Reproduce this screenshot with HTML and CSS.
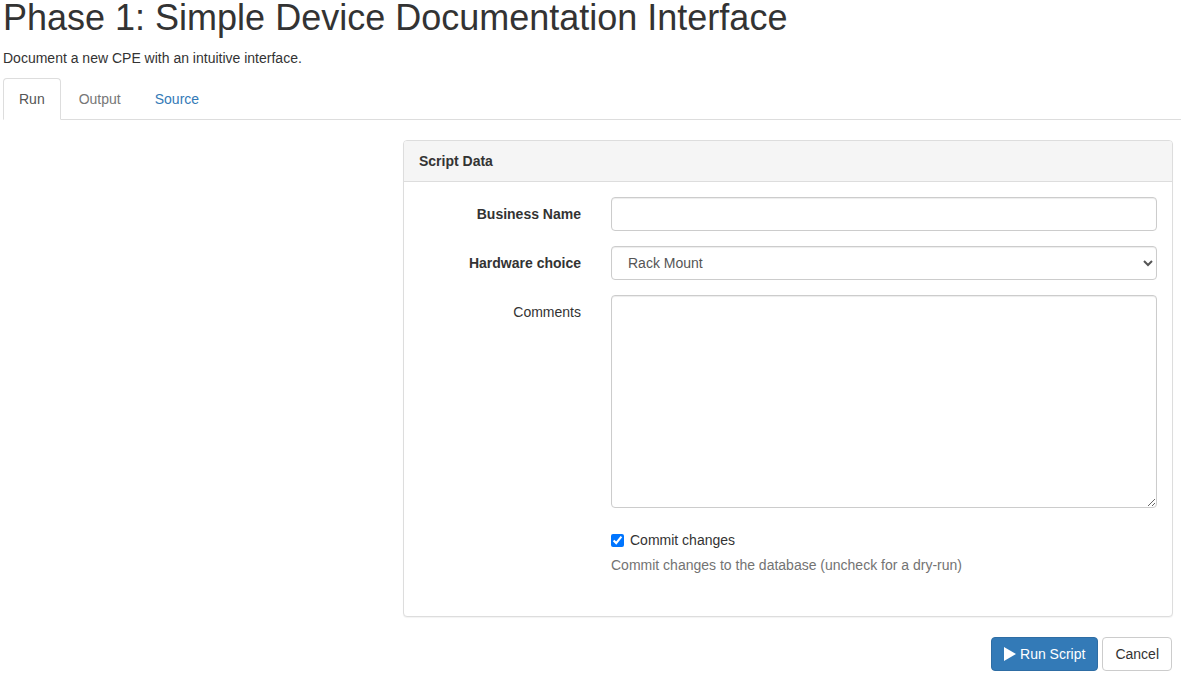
FILE: index.html
```html
<!DOCTYPE html>
<html lang="en">
<head>
<meta charset="utf-8">
<title>Phase 1: Simple Device Documentation Interface</title>
<link rel="stylesheet" href="styles.css">
</head>
<body>
<div class="page">
  <h1 class="title">Phase 1: Simple Device Documentation Interface</h1>
  <p class="lead-text">Document a new CPE with an intuitive interface.</p>
  <ul class="nav-tabs">
    <li class="tab active"><a href="#">Run</a></li>
    <li class="tab muted"><a href="#">Output</a></li>
    <li class="tab"><a href="#">Source</a></li>
  </ul>
  <div class="main">
    <div class="spacer"></div>
    <div class="content">
      <form class="panel">
        <div class="panel-heading"><strong>Script Data</strong></div>
        <div class="panel-body">
          <div class="form-group">
            <label class="control-label required" for="business_name">Business Name</label>
            <div class="field"><input class="form-control" id="business_name" type="text"></div>
          </div>
          <div class="form-group">
            <label class="control-label required" for="hardware">Hardware choice</label>
            <div class="field">
              <select class="form-control select" id="hardware">
                <option>Rack Mount</option>
                <option>Desktop</option>
              </select>
            </div>
          </div>
          <div class="form-group">
            <label class="control-label" for="comments">Comments</label>
            <div class="field"><textarea class="form-control textarea" id="comments"></textarea></div>
          </div>
          <div class="form-group last">
            <div class="label-spacer"></div>
            <div class="field">
              <div class="checkbox">
                <label><input type="checkbox" checked> Commit changes</label>
              </div>
              <span class="help-block">Commit changes to the database (uncheck for a dry-run)</span>
            </div>
          </div>
        </div>
      </form>
      <div class="actions">
        <button class="btn btn-primary" type="button"><svg class="play" viewBox="0 0 12 14" width="12" height="14" aria-hidden="true"><path d="M0 0 L12 7 L0 14 Z" fill="#fff"/></svg> Run Script</button>
        <a class="btn btn-default" href="#">Cancel</a>
      </div>
    </div>
  </div>
</div>
</body>
</html>
```

FILE: styles.css
```css
html, body {
  margin: 0;
  padding: 0;
  background: #fff;
  overflow: hidden;
}
body {
  font-family: "Liberation Sans", Arial, Helvetica, sans-serif;
  font-size: 14px;
  line-height: 20px;
  color: #333;
}
.page {
  padding-left: 3px;
}
.title {
  font-size: 36px;
  font-weight: 500;
  line-height: 35px;
  margin: 0 0 13px 0;
  color: #333;
}
.lead-text {
  margin: 0 0 10px 0;
}
.nav-tabs {
  list-style: none;
  margin: 0;
  padding: 0;
  display: flex;
  border-bottom: 1px solid #ddd;
}
.tab {
  margin-right: 2px;
  margin-bottom: -1px;
}
.tab a {
  display: block;
  padding: 10px 15px;
  line-height: 20px;
  border: 1px solid transparent;
  border-radius: 4px 4px 0 0;
  color: #337ab7;
  text-decoration: none;
}
.tab.muted a {
  color: #777;
}
.tab.active a {
  color: #555;
  background: #fff;
  border-color: #ddd #ddd transparent;
}
.main {
  display: grid;
  grid-template-columns: 400px 770px;
  margin-top: 20px;
}
.panel {
  margin: 0 0 20px 0;
  border: 1px solid #ddd;
  border-radius: 4px;
  box-shadow: 0 1px 1px rgba(0,0,0,.05);
  background: #fff;
}
.panel-heading {
  padding: 10px 15px;
  background: #f5f5f5;
  border-bottom: 1px solid #ddd;
  border-radius: 3px 3px 0 0;
  color: #333;
}
.panel-body {
  padding: 15px 15px 31px 0;
}
.form-group {
  display: grid;
  grid-template-columns: 192px 1fr;
  margin-bottom: 15px;
}
.form-group.last {
  margin-bottom: 0;
}
.control-label {
  text-align: right;
  padding: 7px 15px 0 0;
  font-weight: normal;
}
.control-label.required {
  font-weight: bold;
}
.field {
  padding-left: 15px;
  min-width: 0;
}
.form-control {
  display: block;
  box-sizing: border-box;
  width: 100%;
  height: 34px;
  padding: 6px 12px;
  font-family: inherit;
  font-size: 14px;
  line-height: 20px;
  color: #555;
  background: #fff;
  border: 1px solid #ccc;
  border-radius: 4px;
  box-shadow: inset 0 1px 1px rgba(0,0,0,.075);
  margin: 0;
}
.select {
  padding: 6px 12px;
}
.textarea {
  height: 213px;
  resize: vertical;
}
.checkbox {
  min-height: 27px;
  padding-top: 7px;
  box-sizing: border-box;
}
.checkbox label {
  display: flex;
  align-items: center;
  gap: 6px;
  line-height: 20px;
}
.checkbox input {
  margin: 0;
  width: 13px;
  height: 13px;
}
.help-block {
  display: block;
  margin: 5px 0 10px;
  color: #737373;
}
.actions {
  display: flex;
  justify-content: flex-end;
  gap: 4px;
  padding-right: 1px;
}
.btn {
  display: inline-flex;
  align-items: center;
  gap: 4px;
  box-sizing: border-box;
  height: 34px;
  padding: 6px 12px;
  font-family: inherit;
  font-size: 14px;
  line-height: 20px;
  border: 1px solid transparent;
  border-radius: 4px;
  text-decoration: none;
  cursor: pointer;
}
.btn-primary {
  color: #fff;
  background: #337ab7;
  border-color: #2e6da4;
}
.btn-default {
  color: #333;
  background: #fff;
  border-color: #ccc;
}
.play {
  display: block;
}
```
